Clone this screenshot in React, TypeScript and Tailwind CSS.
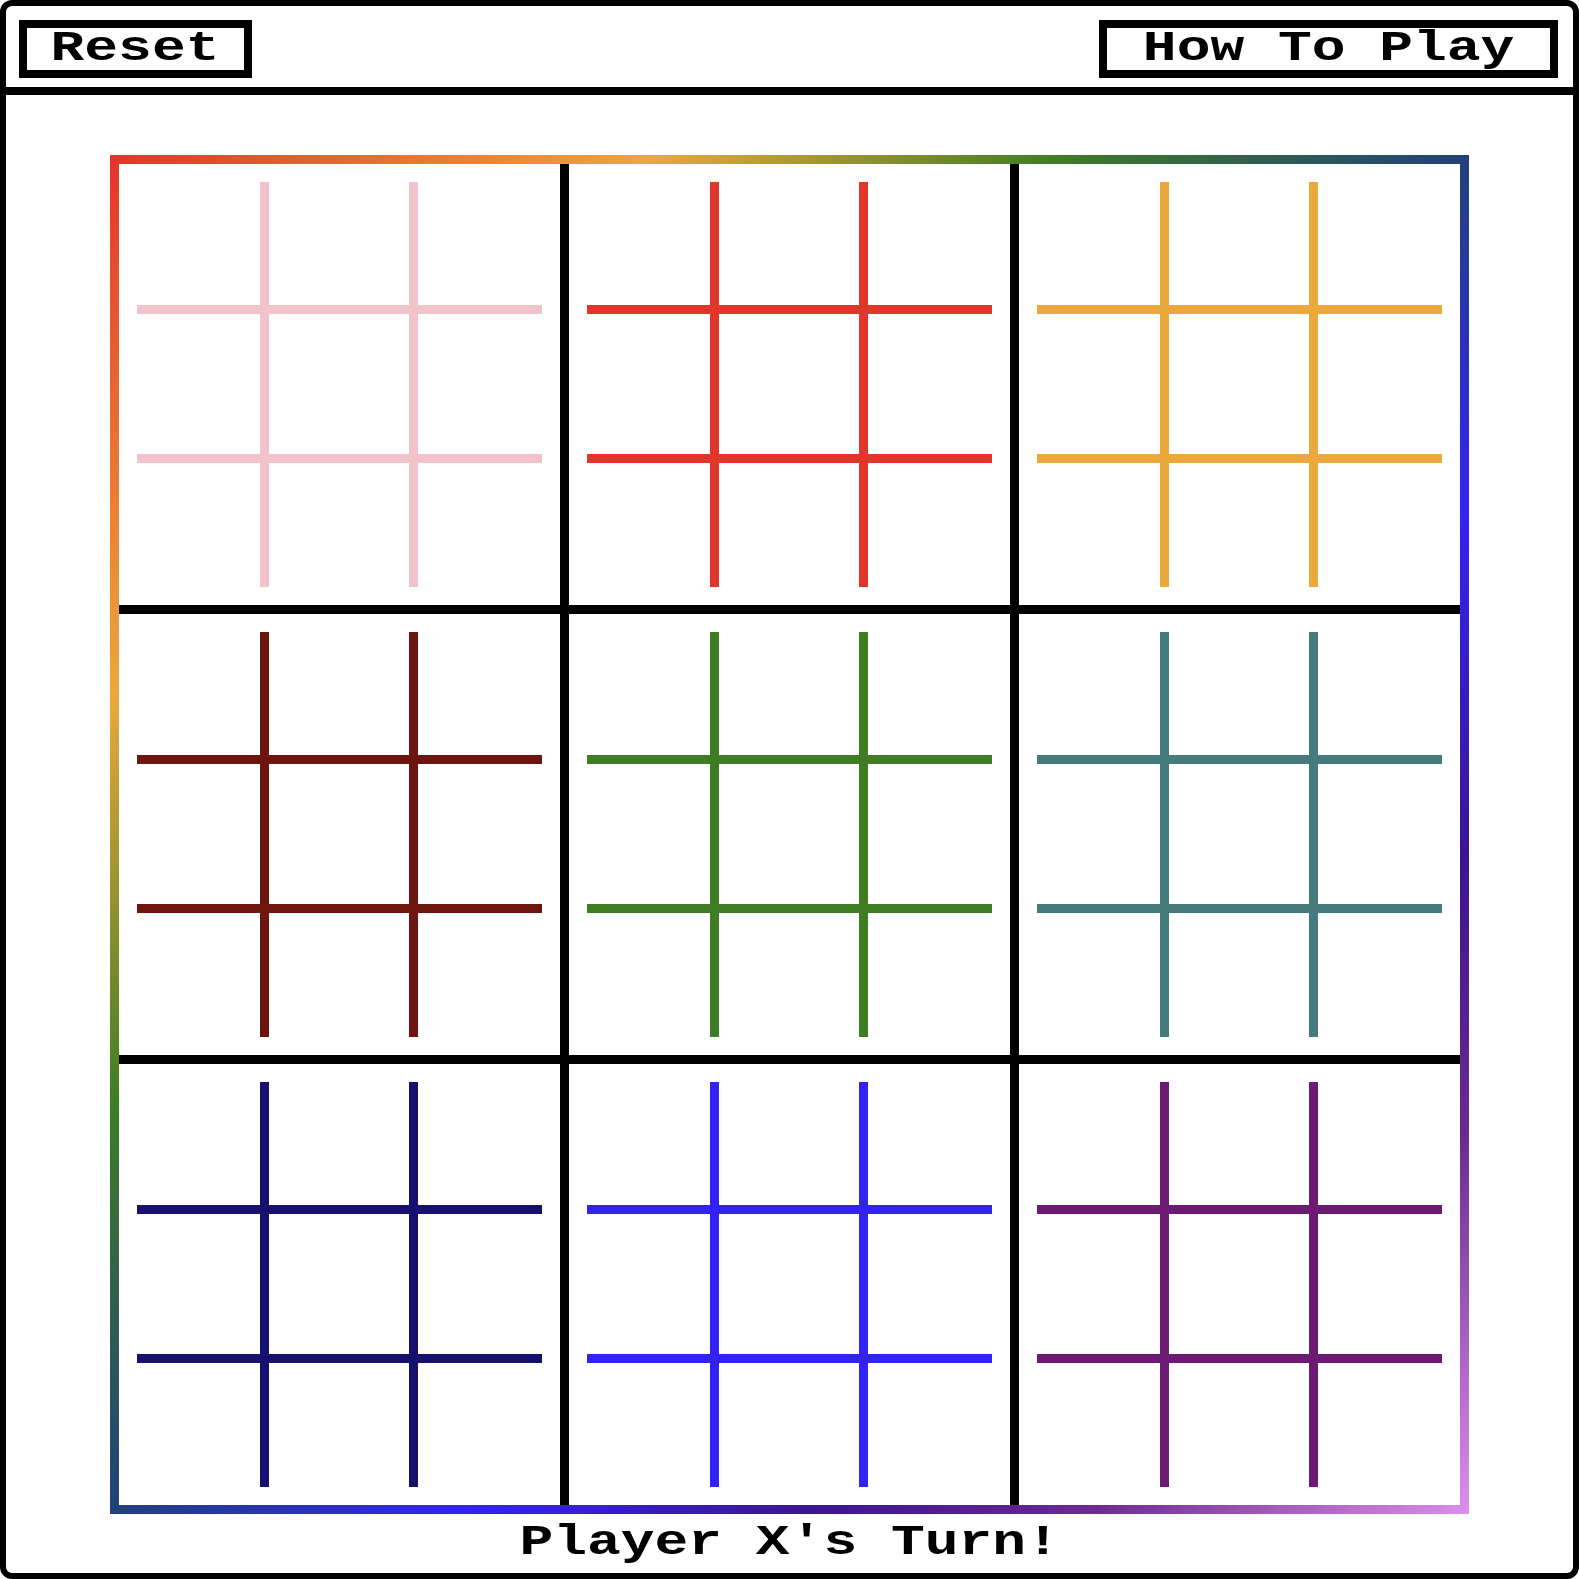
const boards = [
  { line: 'border-[#f2c2cb]' },
  { line: 'border-[#e2362a]' },
  { line: 'border-[#eba83c]' },
  { line: 'border-[#6e1510]' },
  { line: 'border-[#3e7d24]' },
  { line: 'border-[#457b7c]' },
  { line: 'border-[#16106e]' },
  { line: 'border-[#3223f4]' },
  { line: 'border-[#6c1a73]' },
]

function MiniBoard({ line }: { line: string }) {
  const squares = Array.from({ length: 9 }, (_, i) => i)
  return (
    <div className="grid grid-cols-[132px_149px_124px] grid-rows-[132px_149px_124px] w-[405px] h-[405px]">
      {squares.map((i) => {
        const col = i % 3
        const row = Math.floor(i / 3)
        return (
          <div
            key={i}
            className={`${line} ${col < 2 ? 'border-r-[9px]' : ''} ${row < 2 ? 'border-b-[9px]' : ''}`}
          />
        )
      })}
    </div>
  )
}

function Button({ label, width }: { label: string; width: string }) {
  return (
    <button
      type="button"
      className={`${width} h-[58px] border-[8px] border-black bg-white flex items-start justify-center text-[42px] leading-[42px] font-bold text-black`}
    >
      <span className="inline-block scale-x-[1.34] whitespace-pre">{label}</span>
    </button>
  )
}

export default function App() {
  return (
    <div className="w-[1579px] h-[1579px] bg-white border-[6px] border-black rounded-[12px] flex flex-col font-['Liberation_Mono',monospace]">
      <header className="h-[89px] border-b-[8px] border-black flex justify-between items-start pt-[14px] pl-[13px] pr-[15px]">
        <Button label="Reset" width="w-[233px]" />
        <Button label="How To Play" width="w-[459px]" />
      </header>

      <main className="flex flex-col items-center pt-[60px]">
        <div className="w-[1359px] h-[1359px] p-[9px] bg-[linear-gradient(to_bottom_right,#e3342a_0%,#eba83c_20%,#3e7d24_35%,#22417a_50%,#3223f4_63%,#3d1590_76%,#6c2a90_86%,#dd90ec_100%)]">
          <div className="grid grid-cols-3 grid-rows-3 gap-[9px] bg-black w-full h-full">
            {boards.map((b, i) => (
              <div key={i} className="bg-white p-[18px] flex items-center justify-center">
                <MiniBoard line={b.line} />
              </div>
            ))}
          </div>
        </div>
        <p className="mt-[8px] text-[42px] leading-[42px] font-bold text-black">
          <span className="inline-block scale-x-[1.34] whitespace-pre">Player X's Turn!</span>
        </p>
      </main>
    </div>
  )
}
